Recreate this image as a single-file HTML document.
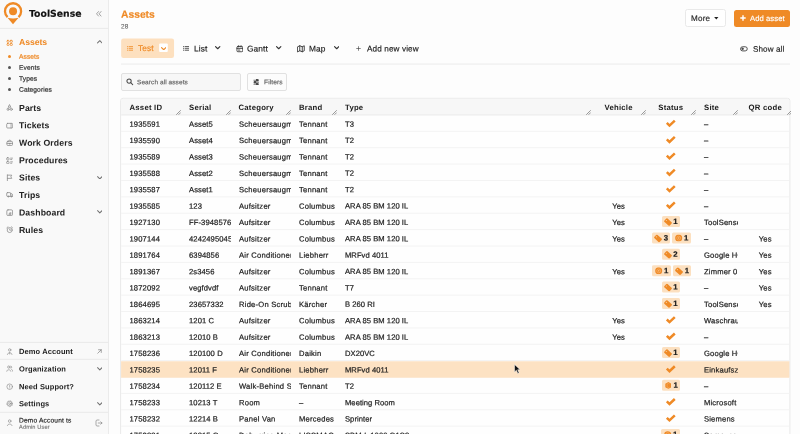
<!DOCTYPE html>
<html><head><meta charset="utf-8">
<style>
*{box-sizing:border-box;margin:0;padding:0}
html,body{width:800px;height:434px;overflow:hidden;background:#fff}
body{font-family:"Liberation Sans",sans-serif;font-size:7.6px;letter-spacing:.15px;color:#1c1c1c;position:relative;text-rendering:geometricPrecision}
.abs{position:absolute}
#wrap{position:absolute;left:0;top:0;width:800px;height:434px;}
#root{position:absolute;left:0;top:0;width:800px;height:434px;overflow:hidden;will-change:transform;background:#fff}
#side{position:absolute;left:0;top:0;width:109.2px;height:434px;background:#f9f9f9;border-right:1px solid #ebebeb}
.nav{position:absolute;left:19px;font-weight:bold;font-size:8.7px;letter-spacing:.1px;color:#222;line-height:12px;white-space:nowrap}
.sub{-webkit-text-stroke:.2px;position:absolute;left:19px;font-size:6.65px;letter-spacing:.08px;color:#262626;line-height:10px;white-space:nowrap}
.dot{position:absolute;left:7.9px;width:3px;height:3px;border-radius:50%;background:#555}
.hl{position:absolute;left:0;width:108.2px;height:1px;background:#ececec}
.ico{position:absolute;left:5.6px;width:7.4px;height:7.4px}
.chev{position:absolute;left:96.5px;width:5.6px;height:3.6px}
#main{position:absolute;left:109.2px;top:0;width:691px;height:434px;background:#fdfdfd}
.t{-webkit-text-stroke:.15px;position:absolute;white-space:nowrap;line-height:10px}
#tbl{position:absolute;left:121.6px;top:98.3px;width:669.2px;height:340px;overflow:hidden}
.hr{position:absolute;left:0;top:0;width:669px;height:17px}
.row{position:absolute;left:0;top:0;width:669px;height:16.38px}
.c{transform:rotate(.03deg);-webkit-text-stroke:.21px #1c1c1c;position:absolute;top:0;height:16.38px;line-height:19.4px;white-space:nowrap;overflow:hidden;padding-left:8px}
.hr .c{-webkit-text-stroke:0;font-weight:bold;font-size:7.75px;letter-spacing:.22px;color:#1c1c1c;line-height:19.7px}
.c1{left:0;width:60px}.c2{left:59.5px;width:49.6px}.c3{left:109.5px;width:59.5px}.c4{left:169.3px;width:46px}.c5{left:215.8px;width:254px}
.c6{left:469.8px;width:55.3px;padding-left:0;text-align:center}.c7{left:524.7px;width:49.7px;padding-left:0;text-align:center}.c8{left:574.8px;width:41.5px}.c9{left:616.3px;width:52.5px;text-align:center;padding-left:0}
.c7{display:flex;align-items:center;justify-content:center;gap:2px}
.hr .c7{display:block}
.hr .c1,.hr .c3{padding-left:7.5px}
.c7.two{padding-left:1.9px}
.row .c9{left:617px}
.hr .c6{left:469.1px}.hr .c9{left:617.1px}
.row .c1{letter-spacing:.15px;padding-left:7.5px}.row .c2{letter-spacing:.1px}.row .c3{letter-spacing:.23px}.row .c4{letter-spacing:.22px}.row .c5{letter-spacing:.05px}.row .c8{letter-spacing:.18px}
.rz{position:absolute;top:11.7px;width:5px;height:5px}
.bd{display:flex;align-items:center;justify-content:center;height:11px;background:#fce0c0;border-radius:1.5px;font-weight:bold;font-size:7.8px;letter-spacing:0;line-height:10.4px;color:#1c1c1c;position:relative;top:.6px}
.bd svg{display:block;flex:none;margin-right:1.4px}
.bd b{display:block;position:relative;top:.7px}
.ck{display:block;width:11px;height:8.4px;position:relative;top:.35px;left:-.3px}
</style></head>
<body>
<div id="root"><div id="wrap">
<div id="side">
<svg class="abs" style="left:0;top:.35px;width:30px;height:28px" viewBox="0 0 30 28"><path d="M7.56 17.19 A8.05 8.05 0 1 1 18.54 17.19" fill="none" stroke="#ef8a26" stroke-width="2.3"/><circle cx="13.05" cy="11.3" r="4" fill="#ef8a26"/><path d="M7.5 17.8 Q13 19.3 18.6 17.8 L13 24.3 Z" fill="#ef8a26"/></svg>
<div class="t" style="left:29.2px;top:0;transform:translateY(7.8px) rotate(.03deg);font-family:'DejaVu Sans','Liberation Sans',sans-serif;font-weight:bold;font-size:9.3px;letter-spacing:0;color:#111;line-height:14px">ToolSense</div>
<svg class="abs" style="left:96.3px;top:11.3px;width:5.6px;height:5.6px" viewBox="0 0 10 10" fill="none" stroke="#777" stroke-width="1.2" stroke-linecap="round" stroke-linejoin="round"><path d="M4.5 1 L1 5 L4.5 9 M9 1 L5.5 5 L9 9"/></svg>
<div class="nav" style="top:0;transform:translateY(36.1px) rotate(.03deg);letter-spacing:-.08px;color:#ef8a26">Assets</div>
<svg class="ico" style="top:38.5px" viewBox="0 0 16 16" fill="none" stroke="#ef8a26" stroke-width="1.7" stroke-linecap="round" stroke-linejoin="round"><rect x="2.2" y="3" width="4.6" height="4.2" rx="1.4"/><rect x="9.2" y="3" width="4.6" height="4.2" rx="1.4"/><rect x="2.2" y="9.8" width="4.6" height="4.2" rx="1.4"/><rect x="9.2" y="9.8" width="4.6" height="4.2" rx="1.4"/></svg>
<svg class="chev" style="top:40.1px" viewBox="0 0 10 6" fill="none" stroke="#707070" stroke-width="1.8" stroke-linecap="round" stroke-linejoin="round"><path d="M1 5 L5 1 L9 5"/></svg>
<div class="dot" style="top:55.35px;background:#ef8a26"></div>
<div class="sub" style="top:0;transform:translateY(52.65px) rotate(.03deg);color:#ef8a26">Assets</div>
<div class="dot" style="top:66.35000000000001px;background:#555"></div>
<div class="sub" style="top:0;transform:translateY(63.650000000000006px) rotate(.03deg);color:#333">Events</div>
<div class="dot" style="top:77.35000000000001px;background:#555"></div>
<div class="sub" style="top:0;transform:translateY(74.65px) rotate(.03deg);color:#333">Types</div>
<div class="dot" style="top:88.35000000000001px;background:#555"></div>
<div class="sub" style="top:0;transform:translateY(85.65px) rotate(.03deg);color:#333">Categories</div>
<div class="nav" style="top:0;transform:translateY(101.9px) rotate(.03deg)">Parts</div>
<svg class="ico" style="top:104.30000000000001px" viewBox="0 0 16 16" fill="none" stroke="#8c8c8c" stroke-width="1.7" stroke-linecap="round" stroke-linejoin="round"><path d="M8 2 L10.5 7 H5.5 Z"/><circle cx="4.5" cy="11.5" r="2.3"/><circle cx="11.5" cy="11.5" r="2.3"/></svg>
<div class="nav" style="top:0;transform:translateY(119.3px) rotate(.03deg)">Tickets</div>
<svg class="ico" style="top:121.7px" viewBox="0 0 16 16" fill="none" stroke="#8c8c8c" stroke-width="1.7" stroke-linecap="round" stroke-linejoin="round"><rect x="1.5" y="3" width="13" height="10" rx="2"/><path d="M11 3 V5.5 M11 10.5 V13 M11 7.5 V8.5"/></svg>
<div class="nav" style="top:0;transform:translateY(136.7px) rotate(.03deg)">Work Orders</div>
<svg class="ico" style="top:139.1px" viewBox="0 0 16 16" fill="none" stroke="#8c8c8c" stroke-width="1.7" stroke-linecap="round" stroke-linejoin="round"><rect x="2" y="5" width="12" height="9" rx="2"/><path d="M5 5 C5 1.5 11 1.5 11 5 M2 9.5 H14 M7 9.5 V11 H9 V9.5"/></svg>
<div class="nav" style="top:0;transform:translateY(154.2px) rotate(.03deg)">Procedures</div>
<svg class="ico" style="top:156.6px" viewBox="0 0 16 16" fill="none" stroke="#8c8c8c" stroke-width="1.7" stroke-linecap="round" stroke-linejoin="round"><rect x="1.5" y="1.5" width="5" height="5" rx="1.5"/><rect x="1.5" y="9.5" width="5" height="5" rx="1.5"/><path d="M10 2.5 H14 M10 5.5 H12.5 M10 10.5 H14 M10 13.5 H12.5"/></svg>
<div class="nav" style="top:0;transform:translateY(171.6px) rotate(.03deg)">Sites</div>
<svg class="ico" style="top:174.0px" viewBox="0 0 16 16" fill="none" stroke="#8c8c8c" stroke-width="1.7" stroke-linecap="round" stroke-linejoin="round"><path d="M3 14.5 V2 M3 2.5 H12.5 L10.5 6 L12.5 9.5 H3"/></svg>
<svg class="chev" style="top:175.6px" viewBox="0 0 10 6" fill="none" stroke="#707070" stroke-width="1.8" stroke-linecap="round" stroke-linejoin="round"><path d="M1 1 L5 5 L9 1"/></svg>
<div class="nav" style="top:0;transform:translateY(189px) rotate(.03deg)">Trips</div>
<svg class="ico" style="top:191.4px" viewBox="0 0 16 16" fill="none" stroke="#8c8c8c" stroke-width="1.7" stroke-linecap="round" stroke-linejoin="round"><rect x="1.5" y="3.5" width="8.5" height="8" rx="1.5"/><path d="M10 6 H13 L14.5 8.5 V11.5 H10"/><circle cx="5" cy="12" r="1.3"/><circle cx="11.5" cy="12" r="1.3"/></svg>
<div class="nav" style="top:0;transform:translateY(206.4px) rotate(.03deg)">Dashboard</div>
<svg class="ico" style="top:208.8px" viewBox="0 0 16 16" fill="none" stroke="#8c8c8c" stroke-width="1.7" stroke-linecap="round" stroke-linejoin="round"><rect x="1.8" y="1.8" width="12.4" height="12.4" rx="2.6"/><path d="M6 11.2 H10.5 M8 11 V8.5 M10.3 11 V7.5"/></svg>
<svg class="chev" style="top:210.4px" viewBox="0 0 10 6" fill="none" stroke="#707070" stroke-width="1.8" stroke-linecap="round" stroke-linejoin="round"><path d="M1 1 L5 5 L9 1"/></svg>
<div class="nav" style="top:0;transform:translateY(223.9px) rotate(.03deg)">Rules</div>
<svg class="ico" style="top:226.3px" viewBox="0 0 16 16" fill="none" stroke="#8c8c8c" stroke-width="1.7" stroke-linecap="round" stroke-linejoin="round"><circle cx="8" cy="8.8" r="5.4"/><path d="M8 6.3 V9 H9.8 M1.8 4 L4.3 1.8 M14.2 4 L11.7 1.8"/></svg>
<div class="nav" style="top:0;transform:translateY(346.1px) rotate(.03deg);font-size:7.5px;letter-spacing:.1px">Demo Account</div>
<svg class="ico" style="top:348.1px" viewBox="0 0 16 16" fill="none" stroke="#8a8a8a" stroke-width="1.4" stroke-linecap="round" stroke-linejoin="round"><circle cx="8" cy="4.2" r="2.6"/><path d="M3 14 C3 9 13 9 13 14 M8 9.5 V13"/></svg>
<div class="nav" style="top:0;transform:translateY(363.4px) rotate(.03deg);font-size:7.5px;letter-spacing:.1px">Organization</div>
<svg class="ico" style="top:365.4px" viewBox="0 0 16 16" fill="none" stroke="#8a8a8a" stroke-width="1.4" stroke-linecap="round" stroke-linejoin="round"><circle cx="6" cy="4.5" r="2.5"/><path d="M1.5 13.5 C1.5 9 10.5 9 10.5 13.5 M10.5 2.3 C13.5 2.5 13.5 6.7 10.5 6.8 M12 9.5 C14 10 14.7 11.5 14.7 13.5"/></svg>
<svg class="chev" style="top:367.4px" viewBox="0 0 10 6" fill="none" stroke="#707070" stroke-width="1.8" stroke-linecap="round" stroke-linejoin="round"><path d="M1 1 L5 5 L9 1"/></svg>
<div class="nav" style="top:0;transform:translateY(381.2px) rotate(.03deg);font-size:7.5px;letter-spacing:.1px">Need Support?</div>
<svg class="ico" style="top:383.2px" viewBox="0 0 16 16" fill="none" stroke="#8a8a8a" stroke-width="1.4" stroke-linecap="round" stroke-linejoin="round"><circle cx="8" cy="8" r="6"/><path d="M8 5 V8.5 M8 10.8 V11"/></svg>
<div class="nav" style="top:0;transform:translateY(398.2px) rotate(.03deg);font-size:7.5px;letter-spacing:.1px">Settings</div>
<svg class="ico" style="top:400.2px" viewBox="0 0 16 16" fill="none" stroke="#8a8a8a" stroke-width="1.4" stroke-linecap="round" stroke-linejoin="round"><circle cx="8" cy="8" r="2"/><circle cx="8" cy="8" r="5"/><circle cx="8" cy="8" r="6.4" stroke-dasharray="1.6 1.75" stroke-width="1.6" stroke-linecap="butt"/></svg>
<svg class="chev" style="top:402.2px" viewBox="0 0 10 6" fill="none" stroke="#707070" stroke-width="1.8" stroke-linecap="round" stroke-linejoin="round"><path d="M1 1 L5 5 L9 1"/></svg>
<svg class="abs" style="left:96.5px;top:348.5px;width:5px;height:5px" viewBox="0 0 10 10" fill="none" stroke="#777" stroke-width="1.3" stroke-linecap="round" stroke-linejoin="round"><path d="M1.5 8.5 L8.5 1.5 M3 1.5 H8.5 V7"/></svg>
<svg class="ico" style="top:419px" viewBox="0 0 16 16" fill="none" stroke="#8a8a8a" stroke-width="1.4" stroke-linecap="round" stroke-linejoin="round"><circle cx="8" cy="4.5" r="2.8"/><path d="M3 14.5 C3 9.5 13 9.5 13 14.5"/></svg>
<div class="t" style="left:19px;top:0;transform:translateY(416.5px) rotate(.03deg);font-size:6.65px;color:#222;line-height:9px">Demo Account ts</div>
<div class="t" style="left:19px;top:0;transform:translateY(424.7px) rotate(.03deg);font-size:5.6px;color:#777;line-height:7px">Admin User</div>
<svg class="abs" style="left:95.3px;top:419.3px;width:8px;height:8px" viewBox="0 0 16 16" fill="none" stroke="#888" stroke-width="1.4" stroke-linecap="round" stroke-linejoin="round"><path d="M8 2 H4 C3 2 2 3 2 4 V12 C2 13 3 14 4 14 H8 M6.5 8 H14 M11.5 5.5 L14 8 L11.5 10.5"/></svg>
</div>
<div id="main"></div>
<div class="t" style="left:120.8px;top:0;transform:translateY(8.7px) rotate(.03deg);font-weight:bold;font-size:10.3px;color:#ef8a26;line-height:14px;letter-spacing:0">Assets</div>
<div class="t" style="left:121px;top:0;transform:translateY(22.5px) rotate(.03deg);font-size:6.4px;color:#666;line-height:9px">28</div>
<div class="abs" style="left:685.2px;top:9.3px;width:40.5px;height:17.3px;border:1px solid #e9e9e9;border-radius:2.5px;background:#fff"></div>
<div class="t" style="left:691px;top:0;transform:translateY(14px) rotate(.03deg);font-size:8.1px;color:#222;letter-spacing:.2px">More</div>
<svg class="abs" style="left:714.3px;top:17.2px;width:4.6px;height:2.6px" viewBox="0 0 10 6"><path d="M0 0 H10 L5 6 Z" fill="#222"/></svg>
<div class="abs" style="left:733.6px;top:9.6px;width:56.4px;height:17.2px;border-radius:2.5px;background:#ef8a26"></div>
<div class="t" style="left:749.8px;top:0;transform:translateY(14.1px) rotate(.03deg);font-size:7.7px;color:#fff;letter-spacing:.05px">Add asset</div>
<svg class="abs" style="left:739.8px;top:15.4px;width:6px;height:6px" viewBox="0 0 10 10"><path d="M5 0.5 V9.5 M0.5 5 H9.5" stroke="#fff" stroke-width="2.4"/></svg>
<svg class="abs" style="left:120px;top:37px;width:56px;height:23px" viewBox="0 0 56 23"><rect x="1.15" y="1.55" width="52.9" height="19.55" rx="2.3" fill="#fde0bf"/><rect x="39.1" y="6.4" width="8.7" height="8.7" rx="1" fill="#fff"/></svg>
<svg class="abs" style="left:126.7px;top:45.7px;width:6.5px;height:5.6px" viewBox="0 0 14 12" fill="none" stroke="#ef8a26" stroke-width="2" stroke-linecap="round"><path d="M1 1.5 H2 M5 1.5 H13 M1 6 H2 M5 6 H13 M1 10.5 H2 M5 10.5 H13"/></svg>
<div class="t" style="left:137.75px;top:0;transform:translateY(42.9px) rotate(.03deg);font-size:8.35px;color:#ef8a26;letter-spacing:.1px">Test</div>
<svg class="abs" style="left:160.6px;top:46.6px;width:5.4px;height:3.4px" viewBox="0 0 10 6" fill="none" stroke="#ef8a26" stroke-width="2.1" stroke-linecap="round" stroke-linejoin="round"><path d="M1 1 L5 5 L9 1"/></svg>
<svg class="abs" style="left:182.6px;top:45.7px;width:6.5px;height:5.6px" viewBox="0 0 14 12" fill="none" stroke="#333" stroke-width="2" stroke-linecap="round"><path d="M1 1.5 H2 M5 1.5 H13 M1 6 H2 M5 6 H13 M1 10.5 H2 M5 10.5 H13"/></svg>
<div class="t" style="left:193.5px;top:0;transform:translateY(43.4px) rotate(.03deg);font-size:8.35px;color:#1a1a1a;letter-spacing:.08px">List</div>
<svg class="abs" style="left:215.2px;top:46.3px;width:5.4px;height:3.4px" viewBox="0 0 10 6" fill="none" stroke="#333" stroke-width="2.1" stroke-linecap="round" stroke-linejoin="round"><path d="M1 1 L5 5 L9 1"/></svg>
<svg class="abs" style="left:235.7px;top:45px;width:7.7px;height:7.7px" viewBox="0 0 16 16" fill="none" stroke="#333" stroke-width="1.8" stroke-linecap="round" stroke-linejoin="round"><rect x="2" y="3" width="12" height="11" rx="2"/><path d="M2 7 H14 M5.5 1.5 V4 M10.5 1.5 V4 M5 10.5 H8"/></svg>
<div class="t" style="left:247.3px;top:0;transform:translateY(43.4px) rotate(.03deg);font-size:8.35px;color:#1a1a1a;letter-spacing:.08px">Gantt</div>
<svg class="abs" style="left:276.2px;top:46.3px;width:5.4px;height:3.4px" viewBox="0 0 10 6" fill="none" stroke="#333" stroke-width="2.1" stroke-linecap="round" stroke-linejoin="round"><path d="M1 1 L5 5 L9 1"/></svg>
<svg class="abs" style="left:297px;top:45.2px;width:8px;height:7.5px" viewBox="0 0 16 15" fill="none" stroke="#333" stroke-width="1.8" stroke-linecap="round" stroke-linejoin="round"><path d="M1.5 3.5 L5.5 1.5 L10.5 3.5 L14.5 1.5 V11.5 L10.5 13.5 L5.5 11.5 L1.5 13.5 Z M5.5 1.5 V11.5 M10.5 3.5 V13.5"/></svg>
<div class="t" style="left:309.3px;top:0;transform:translateY(43.4px) rotate(.03deg);font-size:8.35px;color:#1a1a1a;letter-spacing:.08px">Map</div>
<svg class="abs" style="left:333.7px;top:46.3px;width:5.4px;height:3.4px" viewBox="0 0 10 6" fill="none" stroke="#333" stroke-width="2.1" stroke-linecap="round" stroke-linejoin="round"><path d="M1 1 L5 5 L9 1"/></svg>
<svg class="abs" style="left:355.5px;top:46.4px;width:5px;height:5px" viewBox="0 0 10 10"><path d="M5 0.5 V9.5 M0.5 5 H9.5" stroke="#444" stroke-width="1.3"/></svg>
<div class="t" style="left:366.8px;top:0;transform:translateY(44.5px) rotate(.03deg);font-size:8.2px;color:#1a1a1a;letter-spacing:.1px">Add new view</div>
<svg class="abs" style="left:740.4px;top:46.4px;width:7.8px;height:5.7px" viewBox="0 0 15 11" fill="none" stroke="#444" stroke-width="1.8"><rect x="1" y="1.5" width="13" height="8" rx="4"/><circle cx="5" cy="5.5" r="1.6" fill="#444"/></svg>
<div class="t" style="left:752.5px;top:0;transform:translateY(44.8px) rotate(.03deg);font-size:8.1px;color:#1a1a1a;letter-spacing:.1px">Show all</div>
<div class="abs" style="left:120.5px;top:73px;width:120.5px;height:17.5px;border:1px solid #e1e1e1;border-radius:2px;background:#f7f7f7"></div>
<svg class="abs" style="left:126.2px;top:78.3px;width:7.5px;height:7.5px" viewBox="0 0 14 14" fill="none" stroke="#4a4a4a" stroke-width="1.9" stroke-linecap="round"><circle cx="5.7" cy="5.7" r="4"/><path d="M8.8 8.8 L12.5 12.5"/></svg>
<div class="t" style="left:137px;top:0;transform:translateY(78.2px) rotate(.03deg);font-size:6.5px;color:#5e5e5e;letter-spacing:.08px">Search all assets</div>
<div class="abs" style="left:247px;top:73px;width:40px;height:17.5px;border:1px solid #e1e1e1;border-radius:2px;background:#fcfcfc"></div>
<svg class="abs" style="left:253px;top:78.5px;width:6.5px;height:6.5px" viewBox="0 0 13 13" fill="none" stroke="#444" stroke-width="1.4"><path d="M1 2.5 H12 M1 6.5 H12 M1 10.5 H12"/><rect x="7" y="1" width="3" height="3" fill="#444"/><rect x="2.5" y="5" width="3" height="3" fill="#444"/><rect x="7" y="9" width="3" height="3" fill="#444"/></svg>
<div class="t" style="left:264.1px;top:0;transform:translateY(78.3px) rotate(.03deg);font-size:6.65px;color:#5e5e5e;letter-spacing:.08px">Filters</div>
<svg class="abs" style="left:0;top:0;width:800px;height:434px" viewBox="0 0 800 434">
<path d="M120.6 444 V100.8 Q120.6 98.3 123.1 98.3 H787.4 Q789.9 98.3 789.9 100.8 V444 Z" fill="#fefefe" stroke="#e9e9e9" stroke-width="1"/>
<path d="M121.1 114.95 V100.8 Q121.1 98.8 123.1 98.8 H787.4 Q789.4 98.8 789.4 100.8 V114.95 Z" fill="#f7f7f7"/>
<rect x="121.1" y="114.45" width="668.3" height="1" fill="#ececec"/>
<rect x="121.1" y="130.83" width="668.3" height="1" fill="#f3f3f3"/>
<rect x="121.1" y="147.21" width="668.3" height="1" fill="#f3f3f3"/>
<rect x="121.1" y="163.59" width="668.3" height="1" fill="#f3f3f3"/>
<rect x="121.1" y="179.97" width="668.3" height="1" fill="#f3f3f3"/>
<rect x="121.1" y="196.35" width="668.3" height="1" fill="#f3f3f3"/>
<rect x="121.1" y="212.73" width="668.3" height="1" fill="#f3f3f3"/>
<rect x="121.1" y="229.11" width="668.3" height="1" fill="#f3f3f3"/>
<rect x="121.1" y="245.49" width="668.3" height="1" fill="#f3f3f3"/>
<rect x="121.1" y="261.87" width="668.3" height="1" fill="#f3f3f3"/>
<rect x="121.1" y="278.25" width="668.3" height="1" fill="#f3f3f3"/>
<rect x="121.1" y="294.63" width="668.3" height="1" fill="#f3f3f3"/>
<rect x="121.1" y="311.01" width="668.3" height="1" fill="#f3f3f3"/>
<rect x="121.1" y="327.39" width="668.3" height="1" fill="#f3f3f3"/>
<rect x="121.1" y="343.77" width="668.3" height="1" fill="#f3f3f3"/>
<rect x="121.1" y="360.15" width="668.3" height="1" fill="#f3f3f3"/>
<rect x="121.1" y="376.53" width="668.3" height="1" fill="#f3f3f3"/>
<rect x="121.1" y="392.91" width="668.3" height="1" fill="#f3f3f3"/>
<rect x="121.1" y="409.29" width="668.3" height="1" fill="#f3f3f3"/>
<rect x="121.1" y="425.67" width="668.3" height="1" fill="#f3f3f3"/>
<rect x="121.1" y="361.25" width="668.3" height="16.48" fill="#fde2c3"/>
<rect x="0" y="27.9" width="108.2" height="1" fill="#e9e9e9"/>
<rect x="0" y="341.9" width="108.2" height="1" fill="#e9e9e9"/>
<rect x="0" y="358.8" width="108.2" height="1" fill="#e9e9e9"/>
<rect x="0" y="411.8" width="108.2" height="1" fill="#e9e9e9"/>
<rect x="121" y="63.55" width="669" height="1" fill="#ebebeb"/>
</svg>
<div id="tbl">
<div class="hr"><div class="c c1">Asset ID</div><div class="c c2">Serial</div><div class="c c3">Category</div><div class="c c4">Brand</div><div class="c c5">Type</div><div class="c c6">Vehicle</div><div class="c c7">Status</div><div class="c c8">Site</div><div class="c c9">QR code</div>
<svg class="rz" style="left:54.6px" viewBox="0 0 10 10"><path d="M0.5 9.5 L9.5 0.5 M5 9.5 L9.5 5" stroke="#777" stroke-width="1.5" fill="none"/></svg>
<svg class="rz" style="left:104.6px" viewBox="0 0 10 10"><path d="M0.5 9.5 L9.5 0.5 M5 9.5 L9.5 5" stroke="#777" stroke-width="1.5" fill="none"/></svg>
<svg class="rz" style="left:164.6px" viewBox="0 0 10 10"><path d="M0.5 9.5 L9.5 0.5 M5 9.5 L9.5 5" stroke="#777" stroke-width="1.5" fill="none"/></svg>
<svg class="rz" style="left:210.4px" viewBox="0 0 10 10"><path d="M0.5 9.5 L9.5 0.5 M5 9.5 L9.5 5" stroke="#777" stroke-width="1.5" fill="none"/></svg>
<svg class="rz" style="left:464.4px" viewBox="0 0 10 10"><path d="M0.5 9.5 L9.5 0.5 M5 9.5 L9.5 5" stroke="#777" stroke-width="1.5" fill="none"/></svg>
<svg class="rz" style="left:519.7px" viewBox="0 0 10 10"><path d="M0.5 9.5 L9.5 0.5 M5 9.5 L9.5 5" stroke="#777" stroke-width="1.5" fill="none"/></svg>
<svg class="rz" style="left:569.4px" viewBox="0 0 10 10"><path d="M0.5 9.5 L9.5 0.5 M5 9.5 L9.5 5" stroke="#777" stroke-width="1.5" fill="none"/></svg>
<svg class="rz" style="left:611px" viewBox="0 0 10 10"><path d="M0.5 9.5 L9.5 0.5 M5 9.5 L9.5 5" stroke="#777" stroke-width="1.5" fill="none"/></svg>
<svg class="rz" style="left:665.6px" viewBox="0 0 10 10"><path d="M0.5 9.5 L9.5 0.5 M5 9.5 L9.5 5" stroke="#777" stroke-width="1.5" fill="none"/></svg>
</div>
<div class="row" style="transform:translateY(16.75px)">
<div class="c c1">1935591</div>
<div class="c c2">Asset5</div>
<div class="c c3">Scheuersaugmaschine</div>
<div class="c c4">Tennant</div>
<div class="c c5">T3</div>
<div class="c c6"></div>
<div class="c c7"><svg class="ck" viewBox="0 0 11 8.4"><path d="M1.8 4.2 L4.5 6.8 L9.8 1.8" fill="none" stroke="#ef8a26" stroke-width="2.5"/></svg></div>
<div class="c c8">–</div>
<div class="c c9"></div>
</div>
<div class="row" style="transform:translateY(33.13px)">
<div class="c c1">1935590</div>
<div class="c c2">Asset4</div>
<div class="c c3">Scheuersaugmaschine</div>
<div class="c c4">Tennant</div>
<div class="c c5">T2</div>
<div class="c c6"></div>
<div class="c c7"><svg class="ck" viewBox="0 0 11 8.4"><path d="M1.8 4.2 L4.5 6.8 L9.8 1.8" fill="none" stroke="#ef8a26" stroke-width="2.5"/></svg></div>
<div class="c c8">–</div>
<div class="c c9"></div>
</div>
<div class="row" style="transform:translateY(49.51px)">
<div class="c c1">1935589</div>
<div class="c c2">Asset3</div>
<div class="c c3">Scheuersaugmaschine</div>
<div class="c c4">Tennant</div>
<div class="c c5">T2</div>
<div class="c c6"></div>
<div class="c c7"><svg class="ck" viewBox="0 0 11 8.4"><path d="M1.8 4.2 L4.5 6.8 L9.8 1.8" fill="none" stroke="#ef8a26" stroke-width="2.5"/></svg></div>
<div class="c c8">–</div>
<div class="c c9"></div>
</div>
<div class="row" style="transform:translateY(65.89px)">
<div class="c c1">1935588</div>
<div class="c c2">Asset2</div>
<div class="c c3">Scheuersaugmaschine</div>
<div class="c c4">Tennant</div>
<div class="c c5">T2</div>
<div class="c c6"></div>
<div class="c c7"><svg class="ck" viewBox="0 0 11 8.4"><path d="M1.8 4.2 L4.5 6.8 L9.8 1.8" fill="none" stroke="#ef8a26" stroke-width="2.5"/></svg></div>
<div class="c c8">–</div>
<div class="c c9"></div>
</div>
<div class="row" style="transform:translateY(82.27px)">
<div class="c c1">1935587</div>
<div class="c c2">Asset1</div>
<div class="c c3">Scheuersaugmaschine</div>
<div class="c c4">Tennant</div>
<div class="c c5">T2</div>
<div class="c c6"></div>
<div class="c c7"><svg class="ck" viewBox="0 0 11 8.4"><path d="M1.8 4.2 L4.5 6.8 L9.8 1.8" fill="none" stroke="#ef8a26" stroke-width="2.5"/></svg></div>
<div class="c c8">–</div>
<div class="c c9"></div>
</div>
<div class="row" style="transform:translateY(98.65px)">
<div class="c c1">1935585</div>
<div class="c c2">123</div>
<div class="c c3">Aufsitzer</div>
<div class="c c4">Columbus</div>
<div class="c c5">ARA 85 BM 120 IL</div>
<div class="c c6">Yes</div>
<div class="c c7"><svg class="ck" viewBox="0 0 11 8.4"><path d="M1.8 4.2 L4.5 6.8 L9.8 1.8" fill="none" stroke="#ef8a26" stroke-width="2.5"/></svg></div>
<div class="c c8">–</div>
<div class="c c9"></div>
</div>
<div class="row" style="transform:translateY(115.03px)">
<div class="c c1">1927130</div>
<div class="c c2">FF-3948576</div>
<div class="c c3">Aufsitzer</div>
<div class="c c4">Columbus</div>
<div class="c c5">ARA 85 BM 120 IL</div>
<div class="c c6">Yes</div>
<div class="c c7"><span class="bd" style="width:18.1px"><svg style="width:8px;height:8px" viewBox="0 0 16 16"><g transform="rotate(42 8 8)"><path d="M0.6 5.6 Q0.6 3.4 2.8 3.4 H13.4 Q15.4 3.4 15.4 5.4 V10.6 Q15.4 12.6 13.4 12.6 H2.8 Q0.6 12.6 0.6 10.4 Z" fill="#ef8a26"/><circle cx="3.4" cy="8" r="1" fill="#fce0c0"/></g></svg><b>1</b></span></div>
<div class="c c8">ToolSense HQ</div>
<div class="c c9"></div>
</div>
<div class="row" style="transform:translateY(131.41px)">
<div class="c c1">1907144</div>
<div class="c c2">42424950459</div>
<div class="c c3">Aufsitzer</div>
<div class="c c4">Columbus</div>
<div class="c c5">ARA 85 BM 120 IL</div>
<div class="c c6">Yes</div>
<div class="c c7 two"><span class="bd" style="width:18.1px"><svg style="width:8px;height:8px" viewBox="0 0 16 16"><g transform="rotate(42 8 8)"><path d="M0.6 5.6 Q0.6 3.4 2.8 3.4 H13.4 Q15.4 3.4 15.4 5.4 V10.6 Q15.4 12.6 13.4 12.6 H2.8 Q0.6 12.6 0.6 10.4 Z" fill="#ef8a26"/><circle cx="3.4" cy="8" r="1" fill="#fce0c0"/></g></svg><b>3</b></span><span class="bd" style="width:19.1px"><svg style="width:7.4px;height:7.4px" viewBox="0 0 16 16"><circle cx="8" cy="8" r="7.6" fill="#ef8a26"/><circle cx="8" cy="8" r="4.2" fill="none" stroke="#f8b877" stroke-width="1.4"/><rect x="6.6" y="6.4" width="2.8" height="2.8" fill="#f8b877"/></svg><b>1</b></span></div>
<div class="c c8">–</div>
<div class="c c9">Yes</div>
</div>
<div class="row" style="transform:translateY(147.79px)">
<div class="c c1">1891764</div>
<div class="c c2">6394856</div>
<div class="c c3">Air Conditioner</div>
<div class="c c4">Liebherr</div>
<div class="c c5">MRFvd 4011</div>
<div class="c c6"></div>
<div class="c c7"><span class="bd" style="width:18.1px"><svg style="width:8px;height:8px" viewBox="0 0 16 16"><g transform="rotate(42 8 8)"><path d="M0.6 5.6 Q0.6 3.4 2.8 3.4 H13.4 Q15.4 3.4 15.4 5.4 V10.6 Q15.4 12.6 13.4 12.6 H2.8 Q0.6 12.6 0.6 10.4 Z" fill="#ef8a26"/><circle cx="3.4" cy="8" r="1" fill="#fce0c0"/></g></svg><b>2</b></span></div>
<div class="c c8">Google HQ</div>
<div class="c c9">Yes</div>
</div>
<div class="row" style="transform:translateY(164.17px)">
<div class="c c1">1891367</div>
<div class="c c2">2s3456</div>
<div class="c c3">Aufsitzer</div>
<div class="c c4">Columbus</div>
<div class="c c5">ARA 85 BM 120 IL</div>
<div class="c c6">Yes</div>
<div class="c c7 two"><span class="bd" style="width:19.1px"><svg style="width:7.4px;height:7.4px" viewBox="0 0 16 16"><circle cx="8" cy="8" r="7.6" fill="#ef8a26"/><circle cx="8" cy="8" r="4.2" fill="none" stroke="#f8b877" stroke-width="1.4"/><rect x="6.6" y="6.4" width="2.8" height="2.8" fill="#f8b877"/></svg><b>1</b></span><span class="bd" style="width:18.1px"><svg style="width:8px;height:8px" viewBox="0 0 16 16"><g transform="rotate(42 8 8)"><path d="M0.6 5.6 Q0.6 3.4 2.8 3.4 H13.4 Q15.4 3.4 15.4 5.4 V10.6 Q15.4 12.6 13.4 12.6 H2.8 Q0.6 12.6 0.6 10.4 Z" fill="#ef8a26"/><circle cx="3.4" cy="8" r="1" fill="#fce0c0"/></g></svg><b>1</b></span></div>
<div class="c c8">Zimmer 0.12</div>
<div class="c c9">Yes</div>
</div>
<div class="row" style="transform:translateY(180.55px)">
<div class="c c1">1872092</div>
<div class="c c2">vegfdvdf</div>
<div class="c c3">Aufsitzer</div>
<div class="c c4">Tennant</div>
<div class="c c5">T7</div>
<div class="c c6"></div>
<div class="c c7"><span class="bd" style="width:18.1px"><svg style="width:8px;height:8px" viewBox="0 0 16 16"><g transform="rotate(42 8 8)"><path d="M0.6 5.6 Q0.6 3.4 2.8 3.4 H13.4 Q15.4 3.4 15.4 5.4 V10.6 Q15.4 12.6 13.4 12.6 H2.8 Q0.6 12.6 0.6 10.4 Z" fill="#ef8a26"/><circle cx="3.4" cy="8" r="1" fill="#fce0c0"/></g></svg><b>1</b></span></div>
<div class="c c8">–</div>
<div class="c c9">Yes</div>
</div>
<div class="row" style="transform:translateY(196.93px)">
<div class="c c1">1864695</div>
<div class="c c2">23657332</div>
<div class="c c3">Ride-On Scrubber</div>
<div class="c c4">Kärcher</div>
<div class="c c5">B 260 RI</div>
<div class="c c6"></div>
<div class="c c7"><span class="bd" style="width:18.1px"><svg style="width:8px;height:8px" viewBox="0 0 16 16"><g transform="rotate(42 8 8)"><path d="M0.6 5.6 Q0.6 3.4 2.8 3.4 H13.4 Q15.4 3.4 15.4 5.4 V10.6 Q15.4 12.6 13.4 12.6 H2.8 Q0.6 12.6 0.6 10.4 Z" fill="#ef8a26"/><circle cx="3.4" cy="8" r="1" fill="#fce0c0"/></g></svg><b>1</b></span></div>
<div class="c c8">ToolSense HQ</div>
<div class="c c9">Yes</div>
</div>
<div class="row" style="transform:translateY(213.31px)">
<div class="c c1">1863214</div>
<div class="c c2">1201 C</div>
<div class="c c3">Aufsitzer</div>
<div class="c c4">Columbus</div>
<div class="c c5">ARA 85 BM 120 IL</div>
<div class="c c6">Yes</div>
<div class="c c7"><svg class="ck" viewBox="0 0 11 8.4"><path d="M1.8 4.2 L4.5 6.8 L9.8 1.8" fill="none" stroke="#ef8a26" stroke-width="2.5"/></svg></div>
<div class="c c8">Waschraum</div>
<div class="c c9"></div>
</div>
<div class="row" style="transform:translateY(229.69px)">
<div class="c c1">1863213</div>
<div class="c c2">12010 B</div>
<div class="c c3">Aufsitzer</div>
<div class="c c4">Columbus</div>
<div class="c c5">ARA 85 BM 120 IL</div>
<div class="c c6">Yes</div>
<div class="c c7"><svg class="ck" viewBox="0 0 11 8.4"><path d="M1.8 4.2 L4.5 6.8 L9.8 1.8" fill="none" stroke="#ef8a26" stroke-width="2.5"/></svg></div>
<div class="c c8">–</div>
<div class="c c9"></div>
</div>
<div class="row" style="transform:translateY(246.07px)">
<div class="c c1">1758236</div>
<div class="c c2">120100 D</div>
<div class="c c3">Air Conditioner</div>
<div class="c c4">Daikin</div>
<div class="c c5">DX20VC</div>
<div class="c c6"></div>
<div class="c c7"><span class="bd" style="width:18.1px"><svg style="width:8px;height:8px" viewBox="0 0 16 16"><g transform="rotate(42 8 8)"><path d="M0.6 5.6 Q0.6 3.4 2.8 3.4 H13.4 Q15.4 3.4 15.4 5.4 V10.6 Q15.4 12.6 13.4 12.6 H2.8 Q0.6 12.6 0.6 10.4 Z" fill="#ef8a26"/><circle cx="3.4" cy="8" r="1" fill="#fce0c0"/></g></svg><b>1</b></span></div>
<div class="c c8">Google HQ</div>
<div class="c c9"></div>
</div>
<div class="row" style="transform:translateY(262.45px)">
<div class="c c1">1758235</div>
<div class="c c2">12011 F</div>
<div class="c c3">Air Conditioner</div>
<div class="c c4">Liebherr</div>
<div class="c c5">MRFvd 4011</div>
<div class="c c6"></div>
<div class="c c7"><svg class="ck" viewBox="0 0 11 8.4"><path d="M1.8 4.2 L4.5 6.8 L9.8 1.8" fill="none" stroke="#ef8a26" stroke-width="2.5"/></svg></div>
<div class="c c8">Einkaufszentrum</div>
<div class="c c9"></div>
</div>
<div class="row" style="transform:translateY(278.83px)">
<div class="c c1">1758234</div>
<div class="c c2">120112 E</div>
<div class="c c3">Walk-Behind Scrubber</div>
<div class="c c4">Tennant</div>
<div class="c c5">T2</div>
<div class="c c6"></div>
<div class="c c7"><span class="bd" style="width:18.1px"><svg style="width:6.8px;height:7.4px;margin-left:.7px;margin-right:2px" viewBox="0 0 15 16"><path d="M7.5 .4 L14.3 4.2 V11.8 L7.5 15.6 L0.7 11.8 V4.2 Z" fill="#ef8a26"/><path d="M10 4.6 L7.3 3.4 L4.6 5 V11 L7.3 12.6 L10 11.4" stroke="#f8b877" stroke-width="1.1" fill="none"/></svg><b>1</b></span></div>
<div class="c c8">–</div>
<div class="c c9"></div>
</div>
<div class="row" style="transform:translateY(295.21px)">
<div class="c c1">1758233</div>
<div class="c c2">10213 T</div>
<div class="c c3">Room</div>
<div class="c c4">–</div>
<div class="c c5">Meeting Room</div>
<div class="c c6"></div>
<div class="c c7"><svg class="ck" viewBox="0 0 11 8.4"><path d="M1.8 4.2 L4.5 6.8 L9.8 1.8" fill="none" stroke="#ef8a26" stroke-width="2.5"/></svg></div>
<div class="c c8">Microsoft</div>
<div class="c c9"></div>
</div>
<div class="row" style="transform:translateY(311.59px)">
<div class="c c1">1758232</div>
<div class="c c2">12214 B</div>
<div class="c c3">Panel Van</div>
<div class="c c4">Mercedes</div>
<div class="c c5">Sprinter</div>
<div class="c c6"></div>
<div class="c c7"><svg class="ck" viewBox="0 0 11 8.4"><path d="M1.8 4.2 L4.5 6.8 L9.8 1.8" fill="none" stroke="#ef8a26" stroke-width="2.5"/></svg></div>
<div class="c c8">Siemens</div>
<div class="c c9"></div>
</div>
<div class="row" style="transform:translateY(327.97px)">
<div class="c c1">1758231</div>
<div class="c c2">12215 G</div>
<div class="c c3">Deburring Machine</div>
<div class="c c4">LISSMAC</div>
<div class="c c5">SBM-L 1000 G1S2</div>
<div class="c c6"></div>
<div class="c c7"><span class="bd" style="width:19.1px"><svg style="width:7.4px;height:7.4px" viewBox="0 0 16 16"><circle cx="8" cy="8" r="7.6" fill="#ef8a26"/><circle cx="8" cy="8" r="4.2" fill="none" stroke="#f8b877" stroke-width="1.4"/><rect x="6.6" y="6.4" width="2.8" height="2.8" fill="#f8b877"/></svg><b>1</b></span></div>
<div class="c c8">Samsung</div>
<div class="c c9"></div>
</div>
</div>
<svg class="abs" style="left:513.9px;top:363.8px;width:7.2px;height:10.2px" viewBox="0 0 14 20"><path d="M1 1 V15.5 L4.6 12.2 L7.4 18.6 L10 17.4 L7.2 11.2 H12 Z" fill="#111" stroke="#fff" stroke-width="1"/></svg>
</div></div>
</body></html>
